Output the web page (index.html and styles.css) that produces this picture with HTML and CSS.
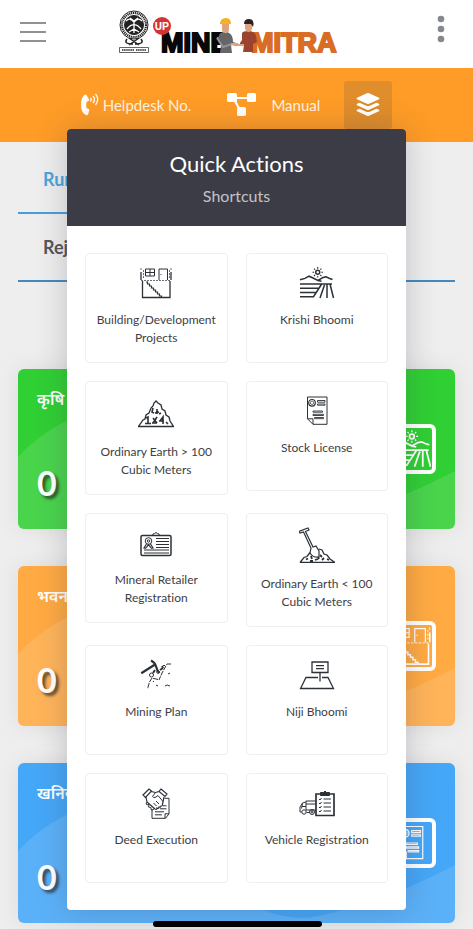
FILE: index.html
```html
<!DOCTYPE html>
<html lang="en">
<head>
    <meta charset="UTF-8">
    <meta name="viewport" content="width=device-width, initial-scale=1.0">
    <title>UP Mine Mitra</title>
    <link rel="stylesheet" href="styles.css">
</head>
<body>
    <!-- Shared icons -->
    <svg class="sprite" aria-hidden="true">
        <symbol id="icon-building" viewBox="0 0 32 32">
            <path d="M1 5v8M31 5v8M2.500 14v16.500h27.500V14" stroke-width="1.300"/>
            <path d="M1 13.500h30M1 1v3M31 1v3M3.500 3v9M29.500 3v9" stroke-width=".7" stroke-dasharray="2 1"/>
            <path d="M5.500 2h9v7h-9zM10 2v7M5.500 5.500h9M19 13V2h8.500v11M21 7v1"/>
            <path d="M6 15h1.500v2h2v2h2v2h2v2h2v2h2v2h2v2h2v2" stroke-width="1.200"/>
        </symbol>
        <symbol id="icon-field" viewBox="0 0 34 32">
            <g stroke-width="1.500">
                <circle cx="17.700" cy="5.300" r="2"/>
                <path d="M17.700 0v1.700M17.700 9v1.600M12.500 5.300h1.600M21.400 5.300H23M14 1.600l1.100 1.100M20.300 7.900L21.400 9M21.400 1.600l-1.100 1.100M15.100 7.900L14 9" stroke-width="1.100"/>
                <path d="M0 12.800l5-1.400 4-2.200 4 1.800 5 2.500 3.500.8M18 13.300l5-2.800 3-.6 3 1.400 3.500 1.200M0 17h32M0 21.300h18.500M0 25.500h16M0 29.700h13.500L21.700 17M24.500 18l-4.500 13M27 17v14M30 17l3.500 14"/>
            </g>
        </symbol>
        <symbol id="icon-licence" viewBox="0 0 34 32">
            <path d="M7.500 2h19.500v27.300H13l-5.500-5.500zM7.500 23.800H13v5.500"/>
            <circle cx="12" cy="7.800" r="3.300" stroke-width="1.200"/>
            <circle cx="12" cy="7.800" r="1.700" stroke-width=".7"/>
            <path d="M17.500 5.500H25v1.700h-7.500zM17.500 9H25v1.200h-7.500zM13 16h9.500v1.200H13zM13 19.300h10.500v1.200H13zM14.500 22.500h9v1.200h-9z" stroke-width=".9"/>
        </symbol>
    </svg>

    <header class="header">
        <button type="button" class="menu-btn" aria-label="Menu">
            <svg width="26" height="22" viewBox="0 0 26 22"><path d="M0 2h26M0 11h26M0 20h26" fill="none" stroke="#8f9294" stroke-width="2"/></svg>
        </button>
        <a href="#" class="logo" aria-label="UP Mine Mitra">
            <svg width="224" height="52" viewBox="118 8 224 52">
                <!-- State emblem -->
                <g fill="none" stroke="#222">
                    <circle cx="134" cy="25" r="14" stroke-width="1"/>
                    <circle cx="134" cy="25" r="12" stroke-width="2.200" stroke-dasharray="1.200 .7"/>
                    <circle cx="134" cy="25" r="9.500" fill="#222"/>
                    <path d="M126 21q4-4 8 1 4-5 8-1M127 29q4-5 7-4 3-1 7 4M134 22v11M130 18l4 3 4-3M129 32l5-3 5 3" stroke="#fff" stroke-width="1.300"/>
                    <path d="M127 39q-4 5 6 5M141 39q4 5-6 5M129 38l10 7M139 38l-10 7" stroke-width="1.500"/>
                    <path d="M119.500 47.500h29v5h-29z" stroke-width=".7"/>
                    <path d="M122 50h12M136 50h10" stroke-width="1.700" stroke-dasharray="1.500 .6"/>
                </g>
                <text class="logo-text" x="161" y="52" fill="#080808" stroke="#080808">MINE</text>
                <text class="logo-text" x="251" y="52" fill="#d96d26" stroke="#d96d26">MITRA</text>
                <circle cx="162" cy="26" r="9" fill="#d4342f"/>
                <text class="logo-badge" x="162" y="30" fill="#fff">UP</text>
                <!-- Miner -->
                <path d="M219 36q0-3 4-4l6 1q4 2 4 9l6 2v2l-8-1 1 8h-12l1-8-4-6z" fill="#66666a"/>
                <path d="M217 38l6 9 9-3" fill="none" stroke="#929297" stroke-width="2"/>
                <path d="M222 24h7v6q-1 4-4 3-3 0-3-4z" fill="#dfa47e"/>
                <path d="M220 24q0-6 6-6 5 0 5 6z" fill="#f6b21d"/>
                <path d="M231 44l7 0" stroke="#dfa47e" stroke-width="2"/>
                <!-- Friend -->
                <path d="M242 33q1-2 6-2 7 0 8 5l1 6-4 2v8h-10l1-7h-4v-2l2-3z" fill="#9b432d"/>
                <path d="M245 23h7v6q-1 3-4 3-3-1-3-4z" fill="#dfa47e"/>
                <path d="M244 24q0-5 5-5 6 0 4 8l-2-3z" fill="#2c2220"/>
                <path d="M237 45h7" stroke="#dfa47e" stroke-width="2"/>
            </svg>
        </a>
        <button type="button" class="more-btn" aria-label="More">
            <svg width="8" height="28" viewBox="0 0 8 28" fill="#85888c"><circle cx="4" cy="4" r="3.300"/><circle cx="4" cy="14" r="3.300"/><circle cx="4" cy="24" r="3.300"/></svg>
        </button>
    </header>

    <nav class="toolbar">
        <a href="#" class="tool-link helpdesk">
            <svg width="18" height="24" viewBox="0 0 18 24">
                <path d="M5.500 2L8 6.500q.3 1-.6 1.500L5.500 9q-.8 3 0 6l2 1q1 .4.700 1.400L7 21.600q-.5.900-1.500.600Q0 20 0 12 0 4 4 1.600q.9-.5 1.500.4z" fill="#fff"/>
                <path d="M9.500 5q1.500 1.500 0 3.500M12 3q3 3.500 0 7M14.500 1q4.500 5 0 11" fill="none" stroke="#fff" stroke-width="1.300"/>
            </svg>
            <span>Helpdesk No.</span>
        </a>
        <a href="#" class="tool-link manual">
            <svg width="30" height="24" viewBox="0 0 30 24">
                <path d="M5 5h20M8 8l6 11" stroke="#fff" stroke-width="2.200"/>
                <rect width="10" height="9" rx="1.500" fill="#fff"/>
                <rect x="20" width="9" height="9" rx="1.500" fill="#fff"/>
                <rect x="10" y="14" width="9" height="9" rx="1.500" fill="#fff"/>
            </svg>
            <span>Manual</span>
        </a>
        <button type="button" class="layers-btn" aria-label="Quick actions">
            <svg width="24" height="24" viewBox="0 0 24 24" fill="#fff">
                <path d="M12 0q.6 0 1 .2l10 4.600q1 .7 0 1.400l-10 4.600q-1 .4-2 0L1 6.200q-1-.7 0-1.400L11 .2q.4-.2 1-.2z"/>
                <path id="layer" d="M1 10.800l2.500-1.100 6.700 3q1.800.8 3.600 0l6.700-3 2.500 1.100q1 .7 0 1.400l-10 4.600q-1 .4-2 0L1 12.200q-1-.7 0-1.400z"/>
                <use href="#layer" y="6"/>
            </svg>
        </button>

        <section class="quick-actions">
            <div class="quick-header">
                <h2>Quick Actions</h2>
                <p>Shortcuts</p>
            </div>
            <div class="quick-grid">
                <a href="#" class="tile">
                    <svg class="tile-icon"><use href="#icon-building"/></svg>
                    <span>Building/Development Projects</span>
                </a>
                <a href="#" class="tile">
                    <svg class="tile-icon"><use href="#icon-field"/></svg>
                    <span>Krishi Bhoomi</span>
                </a>
                <a href="#" class="tile">
                    <svg class="tile-icon tall" viewBox="0 0 36 36">
                        <path d="M.5 31.500L5 25l2-1 1-4 3-2 2-5 2-2 1-3 2-2 2 2 3 2 1 4 3 2 1 4 3 2 1 4 3.500 5.500z" stroke-width="1.300"/>
                        <path d="M15 13l-1 4 2 1M19 14v5M17 18l4-1M21 19l2-1M8 23l2-1v6M7 28.500h6M15 23l4 5M19 22l-4 6M14 28h5M22 26l3-4v7M21 26h5M28 27l2 2" stroke-width="1.600"/>
                    </svg>
                    <span>Ordinary Earth &gt; 100 Cubic Meters</span>
                </a>
                <a href="#" class="tile">
                    <svg class="tile-icon"><use href="#icon-licence"/></svg>
                    <span>Stock License</span>
                </a>
                <a href="#" class="tile">
                    <svg class="tile-icon" viewBox="0 0 32 32">
                        <rect x="1" y="8.500" width="30" height="20" rx="1.500" stroke-width="1.500"/>
                        <path d="M12.500 8.500q0-2 2-2 1.500-2 3 0 2 0 2 2M16 11.500h13M16 14.500h13M16 17.500h13M16 20.500h13M4 23h25M4 26h25"/>
                        <circle cx="8.500" cy="14" r="3.300"/>
                        <circle cx="8.500" cy="14" r="1.200"/>
                        <path d="M6.500 17L4 21l2 .2M10.500 17l2.500 4-2 .2M6 21l2.500-3.500L11 21" stroke-width="1.200"/>
                    </svg>
                    <span>Mineral Retailer Registration</span>
                </a>
                <a href="#" class="tile">
                    <svg class="tile-icon tall" viewBox="0 0 36 36">
                        <path d="M0 4.500L9 1l1 2-3.500 1.500L14 20l3-1 3 5v6q-6 1-9-4l1-5L4.500 5 1 6z" stroke-width="1.200"/>
                        <path d="M1 35.500l4-5 3-1 3-4M20 22l3 1 2 4 3 1 3 4 5 3.500H1" stroke-width="1.300"/>
                        <path d="M7 32.500l2-1M12 29l1 3M16 33l3-1M21 28l2 2M23 33l2-2M28 32l2 1M11 34h3M19 30l1 2" stroke-width="1.800"/>
                    </svg>
                    <span>Ordinary Earth &lt; 100 Cubic Meters</span>
                </a>
                <a href="#" class="tile">
                    <svg class="tile-icon" viewBox="0 0 32 32">
                        <path d="M1.300 14.300L15 5.500M11 1.500q4 2 5 6t3.500 6.500" stroke-width="2.200"/>
                        <circle cx="11.500" cy="16" r="2"/>
                        <circle cx="18" cy="13" r="1.300"/>
                        <path d="M13 14l2-3M22 7l1 2M20 11l3-2M24 6v1" stroke-width="2"/>
                        <path d="M31 5h-4l-5 9-3 7M18 20.500l-6-1.500-2.500 4-2 7" stroke-dasharray="5 1"/>
                        <path d="M16 26l2 1M25 27q2-2 5 0M28 15l2-1M13 22l1 1"/>
                    </svg>
                    <span>Mining Plan</span>
                </a>
                <a href="#" class="tile">
                    <svg class="tile-icon" viewBox="0 0 34 32">
                        <path d="M12 3h16v10.500H12zM16 6.700h8M16 9.700h8M20 13.500v9M18 18.500H6L.500 29.500h33L28 18.500h-6" stroke-width="1.300"/>
                    </svg>
                    <span>Niji Bhoomi</span>
                </a>
                <a href="#" class="tile">
                    <svg class="tile-icon" viewBox="0 0 32 32">
                        <path d="M3 8l6-6 2.500 2-6 6.500zM21 2l6 5-2 2.500-6-5zM11 4.500l4.500 1L19 4.500M6 10l1 5 8 7q2 1 2-1 2 1 2-1 2 .5 2-1 2 0 1.500-2l1.500-7" stroke-width="1.200"/>
                        <path d="M15.500 5.500l-3 4q1 2 3.500.5l2-1.500 5 6M19 17l-3-3M16.500 19l-3-3M7 15l-1 2 2 1 1-1M9 18l-.5 2 2 .5 1-1M11 20.500l0 2 2 .5 1-1.500"/>
                        <path d="M24.500 12H29v15.500L25.500 32H12v-8.500M29 27.500h-4V32M23 19.500h3.500M20 22.500h6.500M15 25.500h9M15 28.500h7" transform="translate(0 -.7)"/>
                    </svg>
                    <span>Deed Execution</span>
                </a>
                <a href="#" class="tile">
                    <svg class="tile-icon" viewBox="0 0 36 32">
                        <path d="M17 7h18v21.500H17z" stroke-width="1.700"/>
                        <path d="M21.500 8.500V5.500h3q1.500-3 3 0h3v3z" fill="#2c3138"/>
                        <path d="M24.500 12H32M24.500 16H32M24.500 20H32M24.500 24H32M20 12l1 1 1.500-2M20 16l1 1 1.500-2M20 20l1 1 1.500-2M20 24l1 1 1.500-2"/>
                        <path d="M17 14H7v9h10M7 15L3.500 16 1 20v5h1.500M3 19.500h4M7 17h10M7.500 25.500h3M3.500 16.500l-1 5"/>
                        <circle cx="5" cy="25" r="2.200"/>
                        <circle cx="13" cy="25" r="2.500"/>
                        <circle cx="13" cy="25" r="1"/>
                    </svg>
                    <span>Vehicle Registration</span>
                </a>
            </div>
        </section>
    </nav>

    <main class="content">
        <div class="tabs">
            <a href="#" class="tab active">Running</a>
            <a href="#" class="tab">Rejected</a>
        </div>

        <div class="cards">
            <div class="card green">
                <svg class="wave" viewBox="0 0 436 160" preserveAspectRatio="none"><path d="M0 88Q20 66 48 52C130 10 190 160 290 155Q360 142 436 102V160H0z"/></svg>
                <div class="card-info">
                    <h3>कृषि</h3>
                    <p>0</p>
                </div>
                <div class="card-icon"><svg><use href="#icon-field"/></svg></div>
            </div>
            <div class="card orange">
                <svg class="wave" viewBox="0 0 436 160" preserveAspectRatio="none"><path d="M0 88Q20 66 48 52C130 10 190 160 290 155Q360 142 436 102V160H0z"/></svg>
                <div class="card-info">
                    <h3>भवन</h3>
                    <p>0</p>
                </div>
                <div class="card-icon"><svg><use href="#icon-building"/></svg></div>
            </div>
            <div class="card blue">
                <svg class="wave" viewBox="0 0 436 160" preserveAspectRatio="none"><path d="M0 88Q20 66 48 52C130 10 190 160 290 155Q360 142 436 102V160H0z"/></svg>
                <div class="card-info">
                    <h3>खनिज</h3>
                    <p>0</p>
                </div>
                <div class="card-icon"><svg><use href="#icon-licence"/></svg></div>
            </div>
        </div>
    </main>

    <div class="home-bar"></div>
</body>
</html>
```
FILE: styles.css
```css
* {
    margin: 0;
    padding: 0;
    box-sizing: border-box;
}

body {
    background: #eeeeee;
    font-family: Lato, "Noto Sans", sans-serif;
    font-variant-ligatures: none;
    color: #3d4045;
}

a {
    color: inherit;
    text-decoration: none;
}

button {
    border: none;
    background: none;
    cursor: pointer;
}

svg {
    display: block;
}

.sprite {
    position: absolute;
    width: 0;
    height: 0;
}

/* Header */
.header {
    display: flex;
    align-items: center;
    height: 68px;
    padding: 0 28px 0 20px;
    background: #fff;
}

.menu-btn {
    padding-bottom: 4px;
}

.logo {
    margin-left: 72px;
}

.logo-text {
    font-family: "Liberation Sans", sans-serif;
    font-size: 27px;
    font-weight: bold;
    stroke-width: 2px;
}

.logo-badge {
    font-family: Roboto, sans-serif;
    font-size: 11px;
    font-weight: bold;
    text-anchor: middle;
}

.more-btn {
    margin-left: auto;
    padding-bottom: 10px;
}

/* Toolbar */
.toolbar {
    position: relative;
    display: flex;
    justify-content: center;
    align-items: center;
    height: 74px;
    background: #ff9c27;
    color: #fff3df;
    font-size: 15px;
}

.tool-link {
    display: flex;
    align-items: center;
}

.helpdesk {
    gap: 4px;
    margin-right: 36px;
}

.manual {
    gap: 14px;
    margin-right: 24px;
}

.layers-btn {
    padding: 12px;
    background: #e08d2b;
    border-radius: 3px;
}

/* Quick actions menu */
.quick-actions {
    position: absolute;
    top: 61px;
    left: 67px;
    right: 67px;
    z-index: 2;
    background: #fff;
    border-radius: 4px;
    box-shadow: 0 0 30px rgba(60, 50, 80, 0.25);
    color: #3d4045;
    overflow: hidden;
}

.quick-header {
    padding: 20px 0;
    background: #3c3c46;
    text-align: center;
}

.quick-header h2 {
    color: #fff;
    font-size: 22px;
    font-weight: normal;
    line-height: 30px;
}

.quick-header p {
    margin-top: 6px;
    color: #c3c3c8;
    font-size: 16px;
    line-height: 21px;
}

.quick-grid {
    display: grid;
    grid-template-columns: repeat(2, minmax(0, 1fr));
    align-items: start;
    gap: 18px;
    padding: 27px 18px;
}

.tile {
    display: flex;
    flex-direction: column;
    align-items: center;
    gap: 12px;
    min-height: 110px;
    padding: 13px 8px 15px;
    border: 1px solid #efefef;
    border-radius: 4px;
    font-size: 12px;
    line-height: 18px;
    text-align: center;
}

.tile-icon {
    width: 36px;
    height: 32px;
    fill: none;
    stroke: #2c3138;
    stroke-width: 1;
}

.tile-icon.tall {
    height: 36px;
}

/* Page content */
.content {
    padding: 0 18px 6px;
}

.tab {
    display: block;
    padding: 24px 25px;
    border-bottom: 2px solid #4389bd;
    font-size: 18px;
    font-weight: bold;
    line-height: 18px;
    color: #55565b;
}

.tab.active {
    width: 60%;
    padding-top: 28px;
    border-bottom: 2px solid #4a9ddc;
    color: #4ba3dc;
}

.cards {
    display: flex;
    flex-direction: column;
    gap: 37px;
    margin-top: 87px;
}

.card {
    position: relative;
    display: flex;
    justify-content: space-between;
    align-items: center;
    height: 160px;
    padding: 0 19px;
    border-radius: 6px;
    box-shadow: 0 0 24px rgba(0, 0, 0, 0.08);
    color: #fff;
    overflow: hidden;
}

.green {
    background: #30cf34;
}

.orange {
    background: #ffaa43;
}

.blue {
    background: #45a7f7;
}

.wave {
    position: absolute;
    inset: 0;
    width: 100%;
    height: 100%;
    fill: rgba(255, 255, 255, 0.12);
}

.card-info {
    padding-bottom: 8px;
}

.card-info h3 {
    font-size: 16px;
    font-weight: 600;
    line-height: 24px;
}

.card-info p {
    margin-top: 52px;
    font-size: 34px;
    font-weight: bold;
    line-height: 40px;
    text-shadow: 3px 3px 3px rgba(0, 0, 0, 0.7);
}

.card-icon {
    padding: 1px;
    border: 4px solid #fff;
    border-radius: 6px;
}

.card-icon svg {
    width: 40px;
    height: 40px;
    fill: none;
    stroke: #fff;
    stroke-width: 1;
}

/* Phone home indicator */
.home-bar {
    position: fixed;
    bottom: 2px;
    left: 50%;
    z-index: 3;
    width: 169px;
    height: 6px;
    margin-left: -84px;
    border-radius: 3px;
    background: #000;
}
```
